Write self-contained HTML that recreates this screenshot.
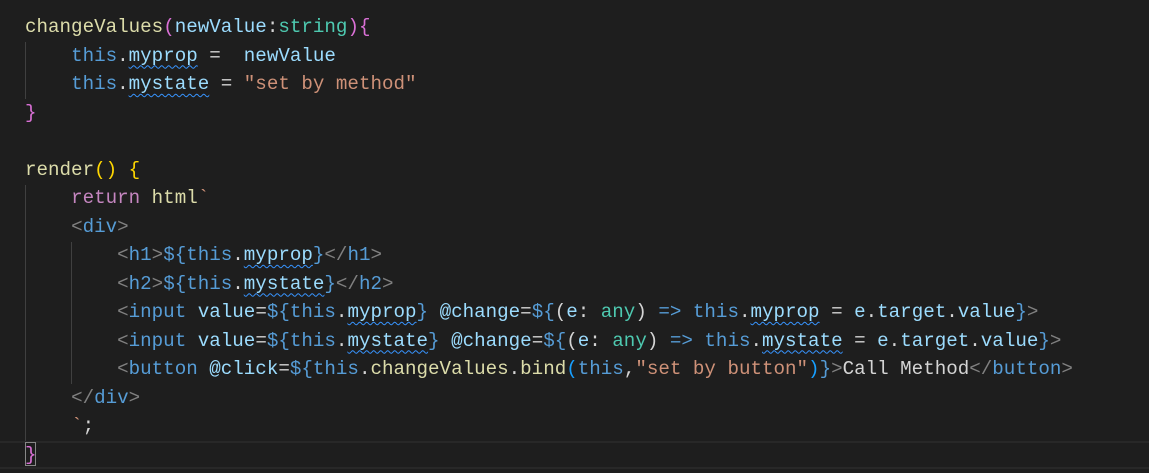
<!DOCTYPE html>
<html><head><meta charset="utf-8"><style>
html,body{margin:0;padding:0;background:#1e1e1e;width:1149px;height:473px;overflow:hidden}
.code{position:absolute;left:25px;top:13px;font-family:"Liberation Mono",monospace;font-size:19.2px;line-height:28.5px;color:#d4d4d4;white-space:pre}
.f{color:#dcdcaa}.p{color:#9cdcfe}.t{color:#4ec9b0}.g{color:#ffd700}.m{color:#da70d6}.k{color:#569cd6}.s{color:#ce9178}.gr{color:#808080}.r{color:#c586c0}.b{color:#179fff}
.w{text-decoration:underline wavy #3794ff;text-underline-offset:4px;text-decoration-thickness:1px}
.guide{position:absolute;width:1px;background:#404040}
.cur{position:absolute;left:0;width:1149px;top:441px;height:24px;border-top:2px solid #282828;border-bottom:2px solid #282828}
.box{position:absolute;left:25px;top:442px;width:11px;height:24px;border:1px solid #888;box-sizing:border-box}
</style></head><body>
<div class="cur"></div>
<div class="box"></div>
<div class="guide" style="left:25px;top:42px;height:57px"></div>
<div class="guide" style="left:25px;top:185px;height:256px"></div>
<div class="guide" style="left:71px;top:242px;height:142px"></div>
<div class="code"><span class="f">changeValues</span><span class="m">(</span><span class="p">newValue</span>:<span class="t">string</span><span class="m">)</span><span class="m">{</span>
    <span class="k">this</span>.<span class="p w">myprop</span> =  <span class="p">newValue</span>
    <span class="k">this</span>.<span class="p w">mystate</span> = <span class="s">"set by method"</span>
<span class="m">}</span>

<span class="f">render</span><span class="g">()</span> <span class="g">{</span>
    <span class="r">return</span> <span class="f">html</span><span class="s">`</span>
    <span class="gr">&lt;</span><span class="k">div</span><span class="gr">&gt;</span>
        <span class="gr">&lt;</span><span class="k">h1</span><span class="gr">&gt;</span><span class="k">${</span><span class="k">this</span>.<span class="p w">myprop</span><span class="k">}</span><span class="gr">&lt;/</span><span class="k">h1</span><span class="gr">&gt;</span>
        <span class="gr">&lt;</span><span class="k">h2</span><span class="gr">&gt;</span><span class="k">${</span><span class="k">this</span>.<span class="p w">mystate</span><span class="k">}</span><span class="gr">&lt;/</span><span class="k">h2</span><span class="gr">&gt;</span>
        <span class="gr">&lt;</span><span class="k">input</span> <span class="p">value</span>=<span class="k">${</span><span class="k">this</span>.<span class="p w">myprop</span><span class="k">}</span> <span class="p">@change</span>=<span class="k">${</span>(<span class="p">e</span>: <span class="t">any</span>) <span class="k">=&gt;</span> <span class="k">this</span>.<span class="p w">myprop</span> = <span class="p">e</span>.<span class="p">target</span>.<span class="p">value</span><span class="k">}</span><span class="gr">&gt;</span>
        <span class="gr">&lt;</span><span class="k">input</span> <span class="p">value</span>=<span class="k">${</span><span class="k">this</span>.<span class="p w">mystate</span><span class="k">}</span> <span class="p">@change</span>=<span class="k">${</span>(<span class="p">e</span>: <span class="t">any</span>) <span class="k">=&gt;</span> <span class="k">this</span>.<span class="p w">mystate</span> = <span class="p">e</span>.<span class="p">target</span>.<span class="p">value</span><span class="k">}</span><span class="gr">&gt;</span>
        <span class="gr">&lt;</span><span class="k">button</span> <span class="p">@click</span>=<span class="k">${</span><span class="k">this</span>.<span class="f">changeValues</span>.<span class="f">bind</span><span class="b">(</span><span class="k">this</span>,<span class="s">"set by button"</span><span class="b">)</span><span class="k">}</span><span class="gr">&gt;</span>Call Method<span class="gr">&lt;/</span><span class="k">button</span><span class="gr">&gt;</span>
    <span class="gr">&lt;/</span><span class="k">div</span><span class="gr">&gt;</span>
    <span class="s">`</span>;
<span class="m">}</span></div>
</body></html>
